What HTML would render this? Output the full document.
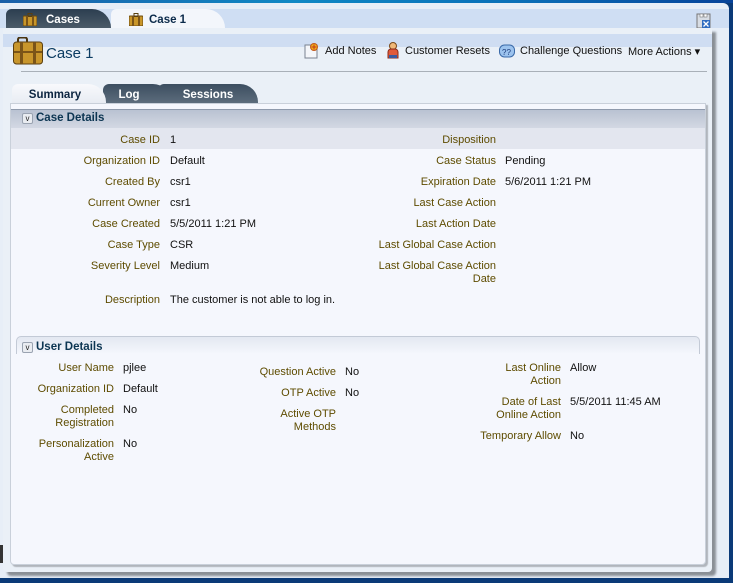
<!DOCTYPE html>
<html><head><meta charset="utf-8"><style>
*{margin:0;padding:0;box-sizing:border-box}
body{width:733px;height:583px;overflow:hidden;background:#0a3a78;font-family:"Liberation Sans",sans-serif;font-size:11px;position:relative}
.abs{position:absolute}
#outer{left:0;top:3px;width:729px;height:575px;background:#e7eef7;border-top-right-radius:6px}
#topbar{left:0;top:0;width:733px;height:3px;background:linear-gradient(90deg,#1a5fa8,#1088c4 40%,#0a70b8 70%,#08449a)}
#tabbar{left:0;top:9px;width:729px;height:19px;background:#cfdef3}
.tab{top:9px;height:19px;font-weight:bold;font-size:11.5px;line-height:23px;padding-left:40px}
#t1{left:6px;width:105px;background:linear-gradient(#2c3e50,#4a5a68);color:#fff;border-radius:6px 20px 0 0}
#t2{left:111px;width:114px;background:#f3f6fb;color:#0b2a4a;border-radius:6px 22px 0 0;padding-left:38px}
#panel{left:3px;top:28px;width:709px;height:544px;background:#eaf0f7;box-shadow:4px 4px 2px #8a8f96;border-radius:0 0 4px 4px}
#band{left:3px;top:34px;width:709px;height:13px;background:#cfddf2}
#title{left:46px;top:45px;font-size:15px;color:#0c3c62}
#line{left:21px;top:71px;width:686px;height:1px;background:#a9b0b8}
.act{top:45px;color:#111;font-size:11px;white-space:nowrap}
.itab{top:84px;height:19px;font-weight:bold;font-size:11.5px;line-height:22px;text-align:center}
#content{left:10px;top:103px;width:696px;height:462px;background:#f5f7fd;border:1px solid #c9d0da;border-radius:0 0 4px 4px;box-shadow:2px 2px 1px #b0b5bc}
#sh1{left:11px;top:109px;width:694px;height:19px;background:linear-gradient(#b9c2d2,#d3d8e3);border-top:1px solid #8f9aac}
#row1{left:11px;top:128px;width:694px;height:21px;background:#e3e6ef}
.sht{font-weight:bold;font-size:11.5px;color:#0c3552}
.chev{width:11px;height:11px;background:#e9ecf1;border:1px solid #9aa3b1;border-radius:2px;font-size:8px;line-height:9px;text-align:center;color:#222}
.l{position:absolute;color:#5e4c00;text-align:right;margin-top:1px}
.v{position:absolute;color:#111;margin-top:1px}
#sh2{left:16px;top:336px;width:684px;height:18px;border:1px solid #c3cad6;border-bottom:none;border-radius:5px 5px 0 0;background:linear-gradient(#e3e8f1,#f5f7fd)}
</style></head><body>
<div id="topbar" class="abs"></div>
<div id="outer" class="abs"></div>
<div id="tabbar" class="abs"></div>
<div id="t1" class="abs tab">Cases</div>
<div id="t2" class="abs tab">Case 1</div>
<svg class="abs" style="left:23px;top:13px" width="14" height="13"><rect x="0" y="3" width="14" height="10" rx="1" fill="#c9962a" stroke="#6b4a10"/><rect x="5" y="0.5" width="4" height="3" fill="none" stroke="#5a4010"/><rect x="3" y="3" width="2" height="10" fill="#7a5418"/><rect x="9" y="3" width="2" height="10" fill="#7a5418"/></svg>
<svg class="abs" style="left:129px;top:13px" width="14" height="13"><rect x="0" y="3" width="14" height="10" rx="1" fill="#c9962a" stroke="#6b4a10"/><rect x="5" y="0.5" width="4" height="3" fill="none" stroke="#5a4010"/><rect x="3" y="3" width="2" height="10" fill="#7a5418"/><rect x="9" y="3" width="2" height="10" fill="#7a5418"/></svg>
<svg class="abs" style="left:696px;top:13px" width="16" height="16"><rect x="1" y="1" width="13" height="14" fill="#d8dde4" stroke="#777"/><rect x="4" y="1" width="3" height="3" fill="#fff" stroke="#777" stroke-width=".6"/><rect x="8" y="1" width="3" height="3" fill="#fff" stroke="#777" stroke-width=".6"/><rect x="6" y="7" width="8" height="8" fill="#2f6cc0"/><path d="M7.5 8.5l5 5M12.5 8.5l-5 5" stroke="#fff" stroke-width="1.3"/></svg>
<div id="panel" class="abs"></div>
<div id="band" class="abs"></div>
<svg class="abs" style="left:13px;top:37px" width="30" height="28"><rect x="5" y="0.5" width="9" height="6" rx="2" fill="none" stroke="#4a3410" stroke-width="2"/><rect x="0.5" y="5" width="29" height="22" rx="3" fill="#c8962c" stroke="#5b3f10"/><rect x="7" y="5" width="3" height="22" fill="#7a5418"/><rect x="20" y="5" width="3" height="22" fill="#7a5418"/><rect x="1" y="14" width="28" height="2" fill="#7a5418"/></svg>
<div id="title" class="abs">Case 1</div>
<svg class="abs" style="left:304px;top:43px" width="15" height="16"><rect x="1" y="2" width="12" height="13" fill="#f4f6fa" stroke="#7a8290"/><circle cx="10" cy="4" r="3.5" fill="#f2b21c" stroke="#c2581a"/><path d="M10 1.5v5M7.5 4h5" stroke="#c2381a"/></svg>
<div class="abs act" style="left:325px">Add Notes</div>
<svg class="abs" style="left:386px;top:42px" width="14" height="17"><circle cx="7" cy="4" r="3.5" fill="#f0b878" stroke="#7a4a1a"/><path d="M2 16v-6a3 3 0 013-3h4a3 3 0 013 3v6z" fill="#e05a3a" stroke="#8a2a1a"/><rect x="3" y="13" width="8" height="3" fill="#3a5aa0"/></svg>
<div class="abs act" style="left:405px">Customer Resets</div>
<svg class="abs" style="left:499px;top:44px" width="16" height="14"><rect x="0.5" y="1" width="15" height="12" rx="5" fill="#9cc3ee" stroke="#3a6aa8"/><text x="3" y="11" font-size="8" fill="#1a3a7a" font-family="Liberation Sans">??</text></svg>
<div class="abs act" style="left:520px">Challenge Questions</div>
<div class="abs act" style="left:628px">More Actions ▾</div>
<div id="line" class="abs"></div>
<div id="content" class="abs"></div>
<div class="abs itab" style="left:158px;width:100px;background:linear-gradient(#3c4e60,#5c6c7c);color:#fff;border-radius:6px 18px 0 0">Sessions</div>
<div class="abs itab" style="left:103px;width:68px;background:linear-gradient(#3c4e60,#5c6c7c);color:#fff;border-radius:6px 18px 0 0;padding-right:16px">Log</div>
<div class="abs itab" style="left:12px;width:94px;background:linear-gradient(#f8f9fc,#e8ecf3);color:#0b2440;border-radius:6px 18px 0 0;padding-right:8px">Summary</div>
<div id="sh1" class="abs"></div>
<div class="abs chev" style="left:22px;top:113px">v</div>
<div class="abs sht" style="left:36px;top:112px">Case Details</div>
<div id="row1" class="abs"></div>
<div class="l" style="right:573px;top:133px">Case ID</div><div class="v" style="left:170px;top:133px">1</div>
<div class="l" style="right:573px;top:154px">Organization ID</div><div class="v" style="left:170px;top:154px">Default</div>
<div class="l" style="right:573px;top:175px">Created By</div><div class="v" style="left:170px;top:175px">csr1</div>
<div class="l" style="right:573px;top:196px">Current Owner</div><div class="v" style="left:170px;top:196px">csr1</div>
<div class="l" style="right:573px;top:217px">Case Created</div><div class="v" style="left:170px;top:217px">5/5/2011 1:21 PM</div>
<div class="l" style="right:573px;top:238px">Case Type</div><div class="v" style="left:170px;top:238px">CSR</div>
<div class="l" style="right:573px;top:259px">Severity Level</div><div class="v" style="left:170px;top:259px">Medium</div>
<div class="l" style="right:573px;top:293px">Description</div><div class="v" style="left:170px;top:293px">The customer is not able to log in.</div>
<div class="l" style="right:237px;top:133px">Disposition</div>
<div class="l" style="right:237px;top:154px">Case Status</div><div class="v" style="left:505px;top:154px">Pending</div>
<div class="l" style="right:237px;top:175px">Expiration Date</div><div class="v" style="left:505px;top:175px">5/6/2011 1:21 PM</div>
<div class="l" style="right:237px;top:196px">Last Case Action</div>
<div class="l" style="right:237px;top:217px">Last Action Date</div>
<div class="l" style="right:237px;top:238px">Last Global Case Action</div>
<div class="l" style="right:237px;top:259px;line-height:13px">Last Global Case Action<br>Date</div>
<div id="sh2" class="abs"></div>
<div class="abs chev" style="left:22px;top:342px">v</div>
<div class="abs sht" style="left:36px;top:341px">User Details</div>
<div class="l" style="right:619px;top:361px;line-height:13px">User Name</div><div class="v" style="left:123px;top:361px">pjlee</div>
<div class="l" style="right:619px;top:382px;line-height:13px">Organization ID</div><div class="v" style="left:123px;top:382px">Default</div>
<div class="l" style="right:619px;top:403px;line-height:13px">Completed<br>Registration</div><div class="v" style="left:123px;top:403px">No</div>
<div class="l" style="right:619px;top:437px;line-height:13px">Personalization<br>Active</div><div class="v" style="left:123px;top:437px">No</div>
<div class="l" style="right:397px;top:365px;line-height:13px">Question Active</div><div class="v" style="left:345px;top:365px">No</div>
<div class="l" style="right:397px;top:386px;line-height:13px">OTP Active</div><div class="v" style="left:345px;top:386px">No</div>
<div class="l" style="right:397px;top:407px;line-height:13px">Active OTP<br>Methods</div>
<div class="l" style="right:172px;top:361px;line-height:13px">Last Online<br>Action</div><div class="v" style="left:570px;top:361px">Allow</div>
<div class="l" style="right:172px;top:395px;line-height:13px">Date of Last<br>Online Action</div><div class="v" style="left:570px;top:395px">5/5/2011 11:45 AM</div>
<div class="l" style="right:172px;top:429px;line-height:13px">Temporary Allow</div><div class="v" style="left:570px;top:429px">No</div>
<div class="abs" style="left:0;top:545px;width:3px;height:18px;background:#333"></div>
</body></html>
